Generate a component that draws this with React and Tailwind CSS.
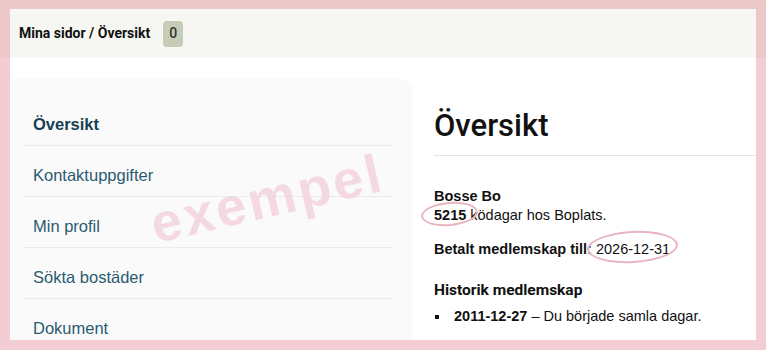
const menu = ["Översikt", "Kontaktuppgifter", "Min profil", "Sökta bostäder", "Dokument"];

export default function App() {
  return (
    <div className="relative w-[766px] h-[350px] overflow-hidden bg-[linear-gradient(to_bottom,#ecc8c8_58px,#f3cdd4_58px)] pt-[9px] px-[10px] pb-[10px]">
      <div className="h-full bg-white flex flex-col overflow-hidden">
        {/* Kopfzeile */}
        <div className="h-[49px] shrink-0 bg-[#f6f7f2] flex items-center pl-[9px] font-['Roboto',sans-serif]">
          <span className="text-[14px] font-bold text-[#111]">Mina sidor / Översikt</span>
          <span className="ml-[13px] w-[20px] h-[26px] rounded-[4px] bg-[#c8ccb6] flex items-center justify-center text-[14px] font-medium text-[#333]">
            0
          </span>
        </div>

        <div className="flex flex-1 min-h-0">
          {/* Sidomeny */}
          <nav className="w-[402px] shrink-0 mt-[21px] bg-[#fafafa] rounded-tr-[9px] pt-[16px] font-['Liberation_Sans',Arial,sans-serif]">
            <ul className="ml-[13px] mr-[20px]">
              {menu.map((item, i) => (
                <li
                  key={item}
                  className={
                    "pl-[10px] pt-[20px] pb-[11px] border-b border-[#ebebeb] text-[16.5px] leading-[19px] " +
                    (i === 0 ? "font-bold text-[#173f52]" : "text-[#2b5b71]")
                  }
                >
                  {item}
                </li>
              ))}
            </ul>
          </nav>

          {/* Innehåll */}
          <main className="flex-1 pl-[22px] pt-[49px]">
            <h1 className="font-['Roboto',sans-serif] font-medium text-[31px] leading-[37px] text-[#111] pb-[11px] border-b border-[#e4e4e4]">
              Översikt
            </h1>
            <div className="mt-[31px] font-['Liberation_Sans',Arial,sans-serif] text-[14.5px] leading-[19px] text-[#111]">
              <p>
                <span className="font-bold">Bosse Bo</span>
                <br />
                <span className="font-bold">5215</span> ködagar hos Boplats.
              </p>
              <p className="mt-[15px]">
                <span className="font-bold">Betalt medlemskap till:</span> 2026-12-31
              </p>
              <h2 className="mt-[21px] font-['Roboto',sans-serif] font-bold text-[15.5px] leading-[20px]">
                Historik medlemskap
              </h2>
              <ul className="mt-[7px]">
                <li className="flex items-center">
                  <span className="w-[4px] h-[4px] bg-[#111] ml-[1px] mr-[15px]" />
                  <span>
                    <span className="font-bold">2011-12-27</span> – Du började samla dagar.
                  </span>
                </li>
              </ul>
            </div>
          </main>
        </div>
      </div>

      {/* vattenstämpel */}
      <div className="absolute left-[144px] top-[168px] w-[246px] text-center rotate-[-13deg] font-['Liberation_Sans',Arial,sans-serif] font-bold text-[54px] leading-[60px] tracking-[3px] text-[#f2d2d9]/80 pointer-events-none">
        exempel
      </div>

      {/* markeringar */}
      <div className="absolute left-[421px] top-[202px] w-[57px] h-[24px] rounded-[50%] border-2 border-[#e8b5bf] rotate-[-5deg]" />
      <div className="absolute left-[587px] top-[231px] w-[91px] h-[32px] rounded-[50%] border-2 border-[#e8b5bf] rotate-[-3deg]" />
    </div>
  );
}
